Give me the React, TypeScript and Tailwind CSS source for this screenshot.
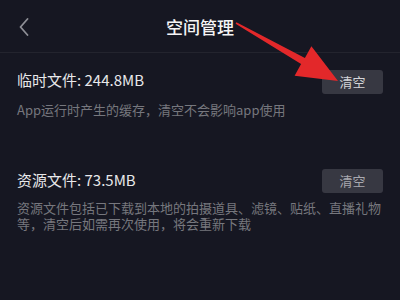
import { ReactNode } from "react";

const font = {
  fontFamily: '"Noto Sans CJK SC", "Noto Sans", sans-serif',
};

function ClearButton({ dim }: { dim?: boolean }) {
  return (
    <button
      className={
        "w-[61px] h-[24px] rounded-[3px] bg-[#373842] text-[13px] leading-[24px] " +
        (dim ? "text-[#a9a9b0]" : "text-[#d4d4d8]")
      }
    >
      清空
    </button>
  );
}

function Section({
  title,
  titleOffset,
  descGap,
  dim,
  children,
}: {
  title: string;
  titleOffset: string;
  descGap: string;
  dim?: boolean;
  children: ReactNode;
}) {
  return (
    <div className="px-[17px]">
      <div className="flex items-start justify-between">
        <div
          className={
            "text-[15px] leading-[20px] text-[#e8e8ea] " + titleOffset
          }
        >
          {title}
        </div>
        <ClearButton dim={dim} />
      </div>
      <div
        className={
          "w-[368px] text-[13px] leading-[16px] text-[#76777e] " + descGap
        }
      >
        {children}
      </div>
    </div>
  );
}

export default function App() {
  return (
    <div
      className="relative w-[400px] h-[300px] overflow-hidden bg-[#161722]"
      style={font}
    >
      <div className="grid grid-cols-[1fr_auto_1fr] items-center h-[53px] border-b border-[#23242e]">
        <div className="pl-[19px] pt-[2px]">
          <svg width="10" height="18" viewBox="0 0 10 18" fill="none">
            <path
              d="M8.5 1 L1.5 9 L8.5 17"
              stroke="#8e8f96"
              strokeWidth="1.8"
              strokeLinecap="round"
              strokeLinejoin="round"
            />
          </svg>
        </div>
        <div className="text-[17px] font-medium leading-[20px] text-[#f4f4f5] pt-[1px]">
          空间管理
        </div>
        <div />
      </div>

      <div className="pt-[17px]">
        <Section title="临时文件: 244.8MB" titleOffset="" descGap="mt-[8px]">
          App运行时产生的缓存，清空不会影响app使用
        </Section>
      </div>

      <div className="pt-[51px]">
        <Section
          title="资源文件: 73.5MB"
          titleOffset="mt-[1px]"
          descGap="mt-[7px]"
          dim
        >
          资源文件包括已下载到本地的拍摄道具、滤镜、贴纸、直播礼物等，清空后如需再次使用，将会重新下载
        </Section>
      </div>

      <svg
        className="absolute inset-0 pointer-events-none"
        width="400"
        height="300"
        viewBox="0 0 400 300"
      >
        <polygon
          points="236.4,22.3 304.9,57.9 311.4,46.2 338,81 294.6,75.8 301.1,64.1 235.6,23.7"
          fill="#e3282a"
        />
      </svg>
    </div>
  );
}
